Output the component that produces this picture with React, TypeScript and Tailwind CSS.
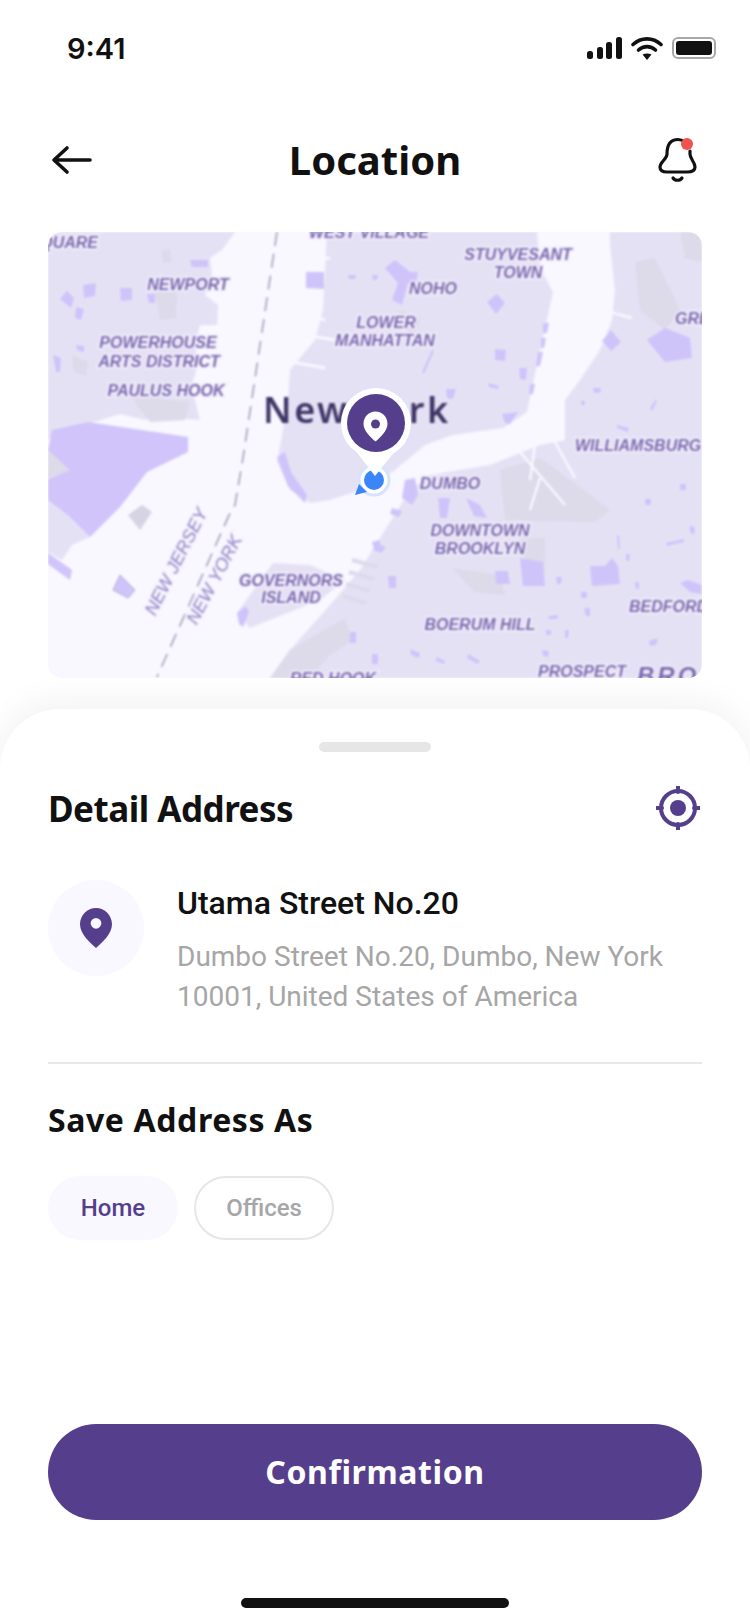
import React from "react";

const PURPLE = "#553E8B";

// map coordinates are the page's own: viewBox starts at the card's top left
const blobs: string[] = [
  "60,299 67,291 74,298 71,308", "83,285 96,283 95,296 84,298", "120,288 132,288 132,300 121,301",
  "76,307 84,309 81,320 75,318", "147,294 155,294 155,303 149,303", "190,260 208,260 208,267 192,267",
  "306,272 324,272 324,289 306,288", "76,345 84,346 84,352 77,350", "53,355 61,358 60,372 56,372",
  "348,275 356,275 355,279 349,279", "372,275 378,275 377,280 373,280", "385,268 395,260 410,272 418,272 416,283 408,283 402,305 392,300 398,283",
  "487,302 497,294 505,303 496,314", "495,349 506,350 505,361 495,360", "519,368 527,368 526,380 520,379",
  "488,383 499,386 498,389 489,387", "446,389 456,389 453,399 447,398", "502,414 518,412 510,424 505,423",
  "611,330 621,342 611,351 602,341", "647,340 665,328 690,338 692,358 665,362", "543,323 549,323 547,333 543,333",
  "541,338 546,338 544,348 541,348", "538,352 543,352 540,366 536,366", "530,384 535,384 533,394 529,394",
  "593,388 601,388 600,393 594,393", "581,401 585,401 585,405 581,405", "617,425 629,428 628,432 617,428",
  "650,408 656,399 657,401 652,411", "422,372 432,350 434,351 424,374",
  "405,480 415,478 418,495 412,505 402,498", "438,498 450,498 447,518 440,518", "466,498 480,505 487,518 474,516",
  "392,508 402,511 399,517 390,514", "376,543 386,547 381,553 373,550", "388,576 396,576 396,588 389,588",
  "520,558 543,562 545,586 523,586", "495,571 508,571 510,584 496,584", "590,566 605,566 612,558 618,566 620,584 592,586",
  "581,592 587,592 587,598 581,598", "584,608 590,608 590,616 586,616", "556,577 562,577 561,584 557,584",
  "548,616 558,615 557,619 549,619", "546,630 551,630 551,635 546,635", "565,630 569,630 568,638 565,638",
  "410,649 420,653 419,658 411,655", "436,657 445,661 444,664 436,661", "468,654 480,661 478,664 467,658",
  "542,650 549,651 548,657 543,656", "649,641 658,638 656,645 650,646", "645,499 651,499 651,505 645,505",
  "680,484 686,484 686,490 680,490", "690,525 695,528 694,535 690,532", "666,543 684,539 684,542 667,546",
  "617,535 619,535 620,549 618,549", "680,583 688,580 702,585 702,594 690,592", "635,582 639,582 639,589 636,589",
  "626,554 630,554 629,561 626,561", "277,457 285,452 291,472 307,495 305,503 288,486",
  "237,613 246,606 249,612 243,627 239,624", "350,632 356,632 356,643 350,643", "372,654 378,654 378,664 372,664",
  "372,542 380,540 380,550 374,549",
];

const greys: string[] = [
  "500,470 540,458 570,480 610,510 595,522 505,520", "520,538 545,538 545,572 528,572", "452,568 500,575 505,595 475,592",
  "155,292 177,292 176,318 160,320", "162,250 170,250 172,262 163,263", "680,232 702,232 702,262 685,258",
  "635,262 655,258 680,310 665,330 640,310", "290,650 345,618 352,640 330,655 310,678 270,678",
  "72,355 88,362 86,376 74,372", "130,395 190,402 185,420 150,422", "48,450 48,480 70,470",
  "400,310 420,320 415,335 402,328",
];

const labels: { t: string; x: number; y: number; a?: "start" | "middle" | "end"; }[] = [
  { t: "QUARE", x: 98, y: 248, a: "end" },
  { t: "WEST VILLAGE", x: 369, y: 238, a: "middle" },
  { t: "STUYVESANT", x: 518, y: 260, a: "middle" },
  { t: "TOWN", x: 518, y: 278, a: "middle" },
  { t: "NEWPORT", x: 188, y: 290, a: "middle" },
  { t: "NOHO", x: 433, y: 294, a: "middle" },
  { t: "LOWER", x: 386, y: 328, a: "middle" },
  { t: "MANHATTAN", x: 385, y: 346, a: "middle" },
  { t: "POWERHOUSE", x: 158, y: 348, a: "middle" },
  { t: "ARTS DISTRICT", x: 159, y: 367, a: "middle" },
  { t: "PAULUS HOOK", x: 166, y: 396, a: "middle" },
  { t: "GREENPOINT", x: 675, y: 324 },
  { t: "WILLIAMSBURG", x: 575, y: 451 },
  { t: "DUMBO", x: 450, y: 489, a: "middle" },
  { t: "DOWNTOWN", x: 480, y: 536, a: "middle" },
  { t: "BROOKLYN", x: 480, y: 554, a: "middle" },
  { t: "GOVERNORS", x: 291, y: 586, a: "middle" },
  { t: "ISLAND", x: 291, y: 603, a: "middle" },
  { t: "BOERUM HILL", x: 480, y: 630, a: "middle" },
  { t: "BEDFORD", x: 629, y: 612 },
  { t: "PROSPECT", x: 538, y: 677 },
  { t: "RED HOOK", x: 333, y: 684, a: "middle" },
];

const PIN = "M12 0C5.4 0 0 5.4 0 12.2c0 7.4 7.3 13.6 12 17.8 4.7-4.2 12-10.4 12-17.8C24 5.4 18.6 0 12 0z";

function MapView() {
  return (
    <svg viewBox="48 232 654 446" className="block w-full h-full">
      <rect x="48" y="232" width="654" height="446" fill="#F9F7FF" />
      <g className="blur-[0.8px]">
        {/* new jersey side */}
        <path
          d="M48 232H235L222 250 210 258 212 275 205 295 218 305 217 325 200 325 195 345 198 365 190 390 195 400 200 420 175 418 165 412 145 420 120 414 85 425 60 430 48 440Z"
          fill="#E5E1F5"
        />
        <path d="M48 500 70 517 90 537 72 545 62 560 48 552Z" fill="#E5E1F5" />
        <path d="M48 553 72 570 70 580 48 564Z" fill="#D0C4FB" />
        <path d="M52 430 88 422 188 437 188 452 147 472 120 507 90 537 70 517 48 500 48 450Z" fill="#D0C4FB" />
        {/* manhattan */}
        <path
          d="M327 232H537L540 268 553 292 537 365 527 412 503 428 453 435 425 445 395 470 370 487 330 500 310 503 290 490 277 462 282 435 288 400 290 370 315 340 323 310Z"
          fill="#E5E1F5"
        />
        {/* brooklyn + queens */}
        <path
          d="M610 232H702V678H270L290 650 330 605 360 570 385 530 410 490 430 475 490 465 540 445 565 440 565 400 580 380 600 350 612 320 615 290 610 245Z"
          fill="#E5E1F5"
        />
        {/* governors island */}
        <path d="M237 613 273 563 310 565 345 580 320 600 250 628Z" fill="#E5E1F5" />
        {greys.map((p) => (
          <polygon key={p} points={p} fill="#DDDAEA" />
        ))}
        {blobs.map((p) => (
          <polygon key={p} points={p} fill="#CFC4FA" />
        ))}
        {/* piers */}
        <g stroke="#DDDAEC" strokeWidth="4">
          <path d="M352 560 378 567M349 572 374 579M346 584 370 591M343 596 366 603" />
        </g>
        <path d="M305 335 335 340M292 362 325 368M307 262 330 258M308 315 325 320" stroke="#F9F7FF" strokeWidth="3" />
        <g stroke="#F9F7FF" strokeWidth="2.5">
          <path d="M520 452 565 505M535 445 530 480M555 442 575 478M540 478 530 510M610 312 632 318" />
        </g>
        <path d="M128 515 142 505 152 512 140 530Z" fill="#D6D3E3" />
        <path d="M113 590 120 575 135 590 128 598Z" fill="#CFC4FA" stroke="#B4B0C8" />
        <path d="M277 232 243 458 235 505 230 513 157 677" fill="none" stroke="#A3A0BE" strokeWidth="1.6" strokeDasharray="14 8" />
        <g
          fontFamily="'Liberation Sans', sans-serif"
          fontStyle="italic"
          fontSize="16"
          fontWeight="700"
          fill="#7A68AE"
          stroke="#F3F0FC"
          strokeWidth="3"
          paintOrder="stroke"
        >
          {labels.map((l) => (
            <text key={l.t} x={l.x} y={l.y} textAnchor={l.a ?? "start"}>
              {l.t}
            </text>
          ))}
          <text x="637" y="684" fontSize="24" letterSpacing="3">BROOKLYN</text>
          <text transform="translate(177 562) rotate(-63)" y="5" textAnchor="middle" fontSize="18" fill="#9485C6" fontWeight="400">NEW JERSEY</text>
          <text transform="translate(215 580) rotate(-62)" y="5" textAnchor="middle" fontSize="18" fill="#9485C6" fontWeight="400">NEW YORK</text>
        </g>
        <text
          x="263"
          y="423"
          fontFamily="'Noto Sans', sans-serif"
          fontSize="36"
          fontWeight="600"
          letterSpacing="2.6"
          fill="#3F3566"
        >
          New York
        </text>
      </g>
      {/* current position */}
      <circle cx="374" cy="480" r="15" fill="#FFFFFF" stroke="#D5E3FF" strokeWidth="3" />
      <circle cx="374" cy="480" r="10" fill="#3A86F8" />
      <path d="M355 495 359 484 367 492Z" fill="#3A86F8" />
      {/* selected pin */}
      <path d="M355 450H396L375 476Z" fill="#FFFFFF" />
      <circle cx="376" cy="423" r="35" fill="#FFFFFF" />
      <circle cx="376" cy="423" r="29" fill={PURPLE} />
      <path transform="translate(363.5 411.5)" d={PIN} fill="#FFFFFF" />
      <circle cx="375.5" cy="424" r="4.5" fill={PURPLE} />
    </svg>
  );
}

export default function App() {
  return (
    <div className="w-[750px] h-[1624px] bg-white flex flex-col overflow-hidden font-['Roboto',sans-serif]">
      {/* status bar */}
      <div className="h-[96px] pl-[67px] pr-[34px] flex items-center justify-between shrink-0">
        <span className="text-[29px] font-semibold text-[#111111] font-['Inter',sans-serif] leading-none">9:41</span>
        <div className="flex items-center gap-[9px]">
          <svg width="35" height="22" viewBox="0 0 35 22" fill="#111111">
            <rect x="0" y="14" width="6" height="8" rx="2.5" />
            <rect x="10" y="10" width="6" height="12" rx="2.5" />
            <rect x="19" y="5" width="6" height="17" rx="2.5" />
            <rect x="29" y="0" width="6" height="22" rx="2.5" />
          </svg>
          <svg width="32" height="23" viewBox="0 0 32 23" fill="none" stroke="#111111" strokeWidth="3.6" strokeLinecap="round">
            <path d="M2 7.5C10 0 22 0 30 7.5" />
            <path d="M7.5 13C12.5 8.5 19.5 8.5 24.5 13" />
            <path d="M16 23 11.5 17.5C14 16 18 16 20.5 17.5Z" fill="#111111" stroke="none" />
          </svg>
          <div className="w-[44px] h-[22px] rounded-[6px] border-2 border-[#a8a8a8] p-[2px]">
            <div className="w-full h-full rounded-[3px] bg-[#111111]" />
          </div>
        </div>
      </div>

      {/* header */}
      <div className="h-[136px] px-[48px] pb-[8px] flex items-center justify-between shrink-0">
        <svg width="48" height="32" viewBox="0 0 48 32" fill="none" stroke="#111111" strokeWidth="3.6" strokeLinecap="round" strokeLinejoin="round">
          <path d="M42 16H7M19 4 6 16 19 28" />
        </svg>
        <h1 className="text-[40px] leading-none font-bold text-[#111111] font-['Noto_Sans',sans-serif]">Location</h1>
        <svg width="46" height="48" viewBox="0 0 46 48" fill="none" stroke="#111111" strokeWidth="3.2" strokeLinecap="round" className="mt-[-2px] mr-[2px]">
          <path d="M31 7C28 5 26 4.500 24 4.500 15 4.500 13 12 13 19 13 24 6 27 6 32 6 36 9 37 13 37H33C38 37 41 36 41 32 41 27 36 24 36 19V16" />
          <path d="M19 43C21 46 26 46 28 43" />
          <circle cx="33" cy="9" r="6" fill="#EF5350" stroke="none" />
        </svg>
      </div>

      {/* map */}
      <div className="mx-[48px] h-[446px] rounded-[14px] overflow-hidden shrink-0">
        <MapView />
      </div>

      {/* sheet */}
      <div className="mt-[31px] flex-1 bg-white rounded-t-[60px] shadow-[0_-6px_36px_rgba(0,0,0,0.06)] px-[48px] flex flex-col">
        <div className="mt-[33px] w-[112px] h-[10px] rounded-full bg-[#e6e6e6] self-center" />
        <div className="mt-[34px] h-[44px] flex items-center justify-between">
          <h2 className="text-[35px] leading-none font-bold tracking-[-0.5px] text-[#111111] font-['Noto_Sans',sans-serif]">Detail Address</h2>
          <svg width="44" height="44" viewBox="0 0 44 44" fill="none" className="mr-[2px]">
            <circle cx="22" cy="22" r="17" stroke={PURPLE} strokeWidth="4" />
            <circle cx="22" cy="22" r="8" fill={PURPLE} />
            <path d="M22 0V6M22 38V44M0 22H6M38 22H44" stroke={PURPLE} strokeWidth="4" strokeLinecap="round" />
          </svg>
        </div>

        <div className="mt-[50px] flex gap-[33px]">
          <div className="w-[96px] h-[96px] rounded-full bg-[#F9F7FF] flex items-center justify-center shrink-0">
            <svg width="34" height="40" viewBox="0 0 24 30">
              <path d={PIN} fill={PURPLE} />
              <circle cx="12" cy="11.500" r="4" fill="#F9F7FF" />
            </svg>
          </div>
          <div className="pt-[5px]">
            <p className="text-[32px] leading-[36px] font-medium text-[#111111]">Utama Street No.20</p>
            <p className="mt-[16px] text-[28px] leading-[40px] text-[#a6a6a6]">
              Dumbo Street No.20, Dumbo, New York
              <br />
              10001, United States of America
            </p>
          </div>
        </div>

        <div className="mt-[45px] h-[2px] bg-[#e8e8e8]" />

        <h2 className="mt-[36px] text-[32px] leading-[40px] font-bold tracking-[0.6px] text-[#111111] font-['Noto_Sans',sans-serif]">Save Address As</h2>

        <div className="mt-[36px] flex gap-[16px]">
          <div className="w-[130px] h-[64px] rounded-full bg-[#F9F7FF] flex items-center justify-center text-[24px] font-medium text-[#553E8B]">Home</div>
          <div className="w-[140px] h-[64px] rounded-full border-2 border-[#e6e6e6] flex items-center justify-center text-[24px] font-medium text-[#a6a6a6]">Offices</div>
        </div>

        <button className="mt-[184px] h-[96px] rounded-full bg-[#553E8B] text-white text-[32px] font-bold tracking-[0.6px] font-['Noto_Sans',sans-serif]">
          Confirmation
        </button>

        <div className="mt-[78px] w-[268px] h-[10px] rounded-full bg-[#111111] self-center" />
      </div>
    </div>
  );
}
